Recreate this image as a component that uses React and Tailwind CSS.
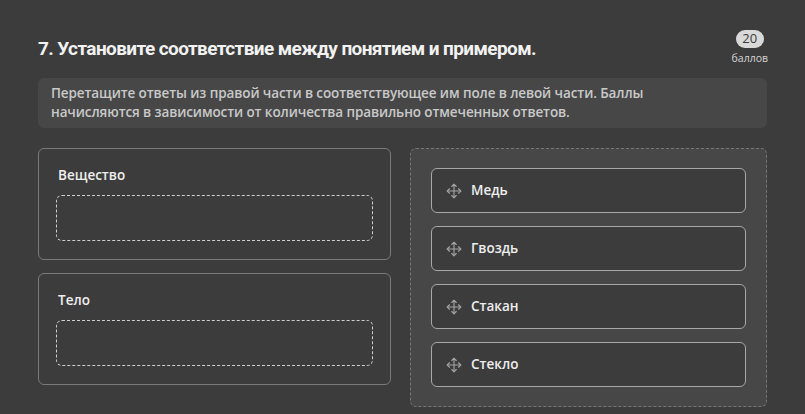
import React from "react";

function MoveIcon() {
  return (
    <svg width="18" height="18" viewBox="0 0 24 24" fill="none" stroke="#a3a3a3" strokeWidth="1.5" strokeLinecap="round" strokeLinejoin="round">
      <path d="M12 3v18M3 12h18" />
      <path d="M9 6l3-3 3 3M9 18l3 3 3-3M6 9l-3 3 3 3M18 9l3 3-3 3" />
    </svg>
  );
}

export default function App() {
  const items = ["Медь", "Гвоздь", "Стакан", "Стекло"];
  const slots = ["Вещество", "Тело"];
  return (
    <div className="w-[805px] h-[414px] overflow-hidden bg-[#3c3c3c] text-white" style={{ fontFamily: "'Open Sans', sans-serif" }}>
      <div className="pl-[38px] pr-[38px] pt-[30px]">
        <div className="flex justify-between items-start h-[48px]">
          <div className="pt-[5px] text-[19px] font-bold tracking-[-0.6px] text-[#f2f2f2]" style={{ fontFamily: "Roboto, sans-serif" }}>
            7. Установите соответствие между понятием и примером.
          </div>
          <div className="flex flex-col items-center mr-[-1px]">
            <div className="w-[28px] h-[18px] rounded-full bg-[#d9d9d9] text-[#3a3a3a] text-[13px] font-medium flex items-center justify-center">20</div>
            <div className="text-[10.5px] text-[#d4d4d4] leading-[14px] mt-[3px]">баллов</div>
          </div>
        </div>
        <div className="h-[50px] rounded-[6px] bg-[#474747] px-[13px] pt-[6px] text-[13.5px] font-semibold leading-[19px] text-[#c9c9c9] tracking-[-0.1px]">
          Перетащите ответы из правой части в соответствующее им поле в левой части. Баллы
          <br />
          начисляются в зависимости от количества правильно отмеченных ответов.
        </div>
        <div className="mt-[20px] flex gap-[19px]">
          <div className="w-[353px] flex flex-col gap-[13px]">
            {slots.map((s) => (
              <div key={s} className="h-[112px] rounded-[6px] border border-[#7a7a7a] px-[17px] pt-[16px]">
                <div className="text-[13.5px] font-semibold text-[#eeeeee] leading-[20px] ml-[2px]">{s}</div>
                <div className="mt-[10px] h-[46px] rounded-[6px] border border-dashed border-[#cfcfcf]"></div>
              </div>
            ))}
          </div>
          <div className="w-[357px] h-[259px] rounded-[6px] border border-dashed border-[#777777] bg-[#474747] px-[20px] pt-[19px] flex flex-col gap-[13px]">
            {items.map((t) => (
              <div key={t} className="h-[45px] rounded-[6px] border border-[#a8a8a8] bg-[#3c3c3c] flex items-center pl-[13px] gap-[8px]">
                <MoveIcon />
                <span className="text-[13.5px] font-semibold text-[#eeeeee]">{t}</span>
              </div>
            ))}
          </div>
        </div>
      </div>
    </div>
  );
}
